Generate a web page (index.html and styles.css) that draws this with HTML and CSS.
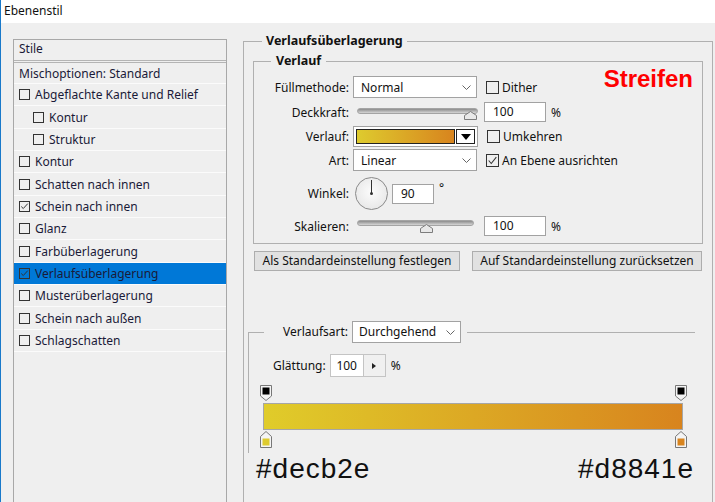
FILE: index.html
```html
<!DOCTYPE html>
<html lang="de">
<head>
    <meta charset="UTF-8">
    <title>Ebenenstil</title>
    <link rel="stylesheet" href="styles.css">
</head>
<body>
    <div class="titlebar">Ebenenstil</div>

    <div class="dialog">
        <aside class="styles-list">
            <div class="list-head">Stile</div>
            <div class="list-item blend">Mischoptionen: Standard</div>
            <div class="list-item"><span class="box"></span>Abgeflachte Kante und Relief</div>
            <div class="list-item sub"><span class="box"></span>Kontur</div>
            <div class="list-item sub"><span class="box"></span>Struktur</div>
            <div class="list-item"><span class="box"></span>Kontur</div>
            <div class="list-item"><span class="box"></span>Schatten nach innen</div>
            <div class="list-item"><span class="box checked"><svg viewBox="0 0 11 11"><polyline points="1.5,5.5 4,8 9.5,2"/></svg></span>Schein nach innen</div>
            <div class="list-item"><span class="box"></span>Glanz</div>
            <div class="list-item"><span class="box"></span>Farbüberlagerung</div>
            <div class="list-item selected"><span class="box checked"><svg viewBox="0 0 11 11"><polyline points="1.5,5.5 4,8 9.5,2"/></svg></span>Verlaufsüberlagerung</div>
            <div class="list-item"><span class="box"></span>Musterüberlagerung</div>
            <div class="list-item"><span class="box"></span>Schein nach außen</div>
            <div class="list-item"><span class="box"></span>Schlagschatten</div>
        </aside>

        <main class="settings">
            <fieldset class="group outer">
                <legend>Verlaufsüberlagerung</legend>

                <fieldset class="group inner">
                    <legend>Verlauf</legend>
                    <span class="note">Streifen</span>

                    <div class="row r-fill">
                        <span class="field-label">Füllmethode:</span>
                        <div class="select wide">Normal<svg class="chev" viewBox="0 0 9 5"><polyline points="0.5,0.5 4.5,4.5 8.5,0.5"/></svg></div>
                        <span class="check"><span class="cbox"></span>Dither</span>
                    </div>

                    <div class="row r-opacity">
                        <span class="field-label">Deckkraft:</span>
                        <div class="slider long">
                            <div class="track"></div>
                            <svg class="thumb" style="left: 107px;" viewBox="0 0 13 9"><path d="M0.5 8.5 V4.5 L6.5 0.5 L12.5 4.5 V8.5 Z"/></svg>
                        </div>
                        <div class="num">100</div>
                        <span class="unit">%</span>
                    </div>

                    <div class="row r-gradient">
                        <span class="field-label">Verlauf:</span>
                        <div class="swatch">
                            <div class="swatch-fill"></div>
                            <div class="swatch-btn"><svg viewBox="0 0 10 6"><path d="M0 0 H10 L5 6 Z"/></svg></div>
                        </div>
                        <span class="check"><span class="cbox"></span>Umkehren</span>
                    </div>

                    <div class="row r-style">
                        <span class="field-label">Art:</span>
                        <div class="select wide">Linear<svg class="chev" viewBox="0 0 9 5"><polyline points="0.5,0.5 4.5,4.5 8.5,0.5"/></svg></div>
                        <span class="check"><span class="cbox"><svg viewBox="0 0 13 13"><polyline points="2,6.5 5,10 11,2.5"/></svg></span>An Ebene ausrichten</span>
                    </div>

                    <div class="row r-angle">
                        <span class="field-label">Winkel:</span>
                        <div class="dial"><span class="hand"></span><span class="pivot"></span></div>
                        <div class="num short">90</div>
                        <span class="unit deg">°</span>
                    </div>

                    <div class="row r-scale">
                        <span class="field-label">Skalieren:</span>
                        <div class="slider">
                            <div class="track"></div>
                            <svg class="thumb" style="left: 63px;" viewBox="0 0 13 9"><path d="M0.5 8.5 V4.5 L6.5 0.5 L12.5 4.5 V8.5 Z"/></svg>
                        </div>
                        <div class="num">100</div>
                        <span class="unit">%</span>
                    </div>
                </fieldset>

                <div class="buttons">
                    <button class="btn">Als Standardeinstellung festlegen</button>
                    <button class="btn">Auf Standardeinstellung zurücksetzen</button>
                </div>

                <fieldset class="group lower">
                    <legend>
                        <span class="legend-label">Verlaufsart:</span>
                        <div class="select type">Durchgehend<svg class="chev" viewBox="0 0 9 5"><polyline points="0.5,0.5 4.5,4.5 8.5,0.5"/></svg></div>
                    </legend>

                    <div class="smooth">
                        <span class="smooth-label">Glättung:</span>
                        <div class="spin">
                            <span class="spin-value">100</span>
                            <span class="spin-btn"><svg viewBox="0 0 4 6"><path d="M0 0 L4 3 L0 6 Z"/></svg></span>
                        </div>
                        <span class="unit">%</span>
                    </div>

                    <div class="editor">
                        <div class="stops">
                            <svg class="stop" viewBox="0 0 12 16"><path class="stop-body" d="M0.5 0.5 H11.5 V11 L6 15.5 L0.5 11 Z"/><rect x="2.5" y="2.5" width="7" height="7" fill="#000"/></svg>
                            <svg class="stop" viewBox="0 0 12 16"><path class="stop-body" d="M0.5 0.5 H11.5 V11 L6 15.5 L0.5 11 Z"/><rect x="2.5" y="2.5" width="7" height="7" fill="#000"/></svg>
                        </div>
                        <div class="bar"></div>
                        <div class="stops colors">
                            <svg class="stop" viewBox="0 0 12 17"><path class="stop-body" d="M0.5 16.5 V5.5 L6 0.5 L11.5 5.5 V16.5 Z"/><rect x="2.5" y="7.5" width="7" height="7" fill="#decb2e"/></svg>
                            <svg class="stop" viewBox="0 0 12 17"><path class="stop-body" d="M0.5 16.5 V5.5 L6 0.5 L11.5 5.5 V16.5 Z"/><rect x="2.5" y="7.5" width="7" height="7" fill="#d8841e"/></svg>
                        </div>
                    </div>
                </fieldset>

                <div class="hex-row">
                    <span>#decb2e</span>
                    <span>#d8841e</span>
                </div>
            </fieldset>
        </main>
    </div>
</body>
</html>
```

FILE: styles.css
```css
body {
    margin: 0;
    height: 502px;
    overflow: hidden;
    background-color: #efefef;
    border-left: 1px solid #1979ca;
    font-family: "Noto Sans", "Open Sans", sans-serif;
    font-size: 12px;
    color: #111;
}

.titlebar {
    height: 23px;
    line-height: 21px;
    padding-left: 3px;
    background-color: #fff;
}

.dialog {
    display: flex;
    align-items: flex-start;
    padding: 16px 0 0 12px;
}

/* left list of layer styles */
.styles-list {
    box-sizing: border-box;
    width: 214px;
    height: 480px;
    flex-shrink: 0;
    border: 1px solid #a8a8a8;
    color: #1a1a38;
}
.list-head {
    height: 20px;
    line-height: 18px;
    padding-left: 5px;
    border-bottom: 3px double #b4b4b4;
}
.list-item {
    display: flex;
    align-items: center;
    box-sizing: border-box;
    height: 22.35px;
    padding-left: 5px;
    border-bottom: 1px solid #fbfbfb;
}
.list-item.blend {
    height: 21px;
}
.list-item.sub {
    padding-left: 19px;
}
.list-item.selected {
    background-color: #0078d7;
}
.box {
    box-sizing: border-box;
    width: 11px;
    height: 11px;
    margin-right: 5px;
    border: 1px solid #333;
    flex-shrink: 0;
}
.box svg, .cbox svg {
    display: block;
    width: 100%;
    height: 100%;
    fill: none;
    stroke: #333;
    stroke-width: 1.2;
}

/* right side */
.settings {
    margin: -6px 0 0 16px;
}
.group {
    margin: 0;
    border: 1px solid #b0b0b0;
    min-width: 0;
}
.group > legend {
    font-weight: bold;
    font-size: 12.5px;
    line-height: 16px;
}
.outer {
    box-sizing: border-box;
    width: 470px;
    height: 520px;
    padding: 0 9px;
}
.outer > legend {
    padding: 0 4px;
    margin-left: 9px;
}
.inner {
    position: relative;
    margin-top: 4px;
    padding: 7px 0 7px 0;
}
.inner > legend {
    padding: 0 5px;
    margin-left: 17px;
}
.note {
    position: absolute;
    top: -4px;
    right: 9px;
    font-family: "Liberation Sans", Arial, sans-serif;
    font-weight: bold;
    font-size: 24px;
    line-height: 28px;
    color: #ff0000;
}

.row {
    display: flex;
    align-items: center;
}
.field-label {
    width: 95px;
    margin-right: 4px;
    text-align: right;
}
.r-opacity, .r-gradient {
    margin-top: 4px;
}
.r-style {
    margin-top: 2px;
}
.r-angle {
    margin-top: 6px;
}
.r-scale {
    margin-top: 6px;
}

.select {
    display: flex;
    align-items: center;
    justify-content: space-between;
    box-sizing: border-box;
    height: 22px;
    padding: 0 5px 0 7px;
    background-color: #fff;
    border: 1px solid #a2a2a2;
}
.select.wide {
    width: 124px;
}
.chev {
    width: 9px;
    height: 5px;
    fill: none;
    stroke: #666;
    stroke-width: 1;
}

.check {
    display: flex;
    align-items: center;
    margin-left: 9px;
}
.cbox {
    box-sizing: border-box;
    width: 13px;
    height: 13px;
    margin-right: 3px;
    border: 1px solid #333;
}

.slider {
    position: relative;
    width: 117px;
    height: 20px;
    margin-left: 4px;
}
.slider.long {
    width: 121px;
}
.track {
    position: absolute;
    top: 6px;
    left: 0;
    right: 0;
    height: 4px;
    border: 1px solid #a4a4a4;
    border-radius: 3px;
    background: linear-gradient(#8c8c8c, #d6d6d6);
}
.r-scale .track {
    top: 4px;
}
.thumb {
    position: absolute;
    top: 9px;
    width: 13px;
    height: 9px;
    fill: #e8e8e8;
    stroke: #7c7c7c;
}
.r-scale .thumb {
    top: 8px;
}

.num {
    box-sizing: border-box;
    width: 62px;
    height: 20px;
    margin-left: 6px;
    padding-left: 8px;
    line-height: 18px;
    background-color: #fff;
    border: 1px solid #a2a2a2;
}
.r-scale .num {
    margin-left: 10px;
}
.num.short {
    width: 42px;
    margin-left: 4px;
}
.unit {
    margin-left: 5px;
}
.unit.deg {
    align-self: flex-start;
    margin-top: 2px;
}

.swatch {
    display: flex;
    box-sizing: border-box;
    width: 125px;
    height: 21px;
    padding: 2px;
    background-color: #fff;
    border: 1px solid #a2a2a2;
}
.swatch-fill {
    flex: 1;
    border: 1px solid #222;
    background: linear-gradient(to right, #decb2e, #d8841e);
}
.swatch-btn {
    display: flex;
    align-items: center;
    justify-content: center;
    width: 17px;
    margin-left: 1px;
    border: 1px solid #222;
}
.swatch-btn svg {
    width: 10px;
    height: 6px;
    fill: #000;
}

.dial {
    position: relative;
    box-sizing: border-box;
    width: 33px;
    height: 33px;
    margin-left: 2px;
    border: 1px solid #8a8a8a;
    border-radius: 50%;
    background: radial-gradient(circle at 50% 45%, #fcfcfc, #e2e2e2);
}
.hand {
    position: absolute;
    left: 15px;
    top: 2px;
    width: 1px;
    height: 14px;
    background-color: #333;
}
.pivot {
    position: absolute;
    left: 14px;
    top: 14px;
    width: 3px;
    height: 3px;
    border-radius: 50%;
    background-color: #333;
}

.buttons {
    display: flex;
    justify-content: space-between;
    margin-top: 7px;
    padding: 0 1px;
}
.btn {
    height: 20px;
    padding: 0;
    white-space: nowrap;
    font-family: inherit;
    font-size: 12px;
    line-height: 18px;
    color: #111;
    background-color: #e1e1e1;
    border: 1px solid #adadad;
}
.btn:first-child {
    width: 206px;
}
.btn:last-child {
    width: 230px;
}

/* gradient editor */
.lower {
    width: 446px;
    margin: 50px 0 0 -5px;
    padding: 0 0 5px 0;
    border-right: none;
    border-bottom: none;
}
.lower > legend {
    display: flex;
    align-items: center;
    margin-left: 15px;
    padding: 0 6px 0 19px;
    font-weight: normal;
    font-size: 12px;
}
.legend-label {
    margin-right: 4px;
}
.select.type {
    width: 109px;
    padding-left: 6px;
}

.smooth {
    display: flex;
    align-items: center;
    margin: 11px 0 0 24px;
}
.smooth-label {
    margin-right: 4px;
}
.spin {
    display: flex;
    box-sizing: border-box;
    height: 23px;
    background-color: #fff;
    border: 1px solid #c4c4c4;
}
.spin-value {
    width: 32px;
    line-height: 21px;
    text-align: center;
}
.spin-btn {
    display: flex;
    align-items: center;
    justify-content: center;
    width: 21px;
    background-color: #f0f0f0;
    border-left: 1px solid #c4c4c4;
}
.spin-btn svg {
    width: 4px;
    height: 6px;
    fill: #222;
}

.editor {
    width: 420px;
    margin: 8px 0 0 14px;
}
.stops {
    display: flex;
    justify-content: space-between;
    margin: 0 -4px 0 -3px;
    height: 16px;
}
.stops.colors {
    height: 17px;
    margin-top: 1px;
}
.stop {
    width: 12px;
    height: 100%;
}
.stop-body {
    fill: #f4f4f4;
    stroke: #777;
}
.bar {
    box-sizing: border-box;
    height: 27px;
    margin-top: 2px;
    border: 1px solid #a6a6a6;
    background: linear-gradient(to right, #e0cc2a, #d8841e);
}

.hex-row {
    display: flex;
    justify-content: space-between;
    margin: 0 9px 0 3px;
    font-family: "Liberation Sans", Arial, sans-serif;
    font-size: 28px;
    line-height: 32px;
    letter-spacing: 1px;
    color: #111;
}
```
